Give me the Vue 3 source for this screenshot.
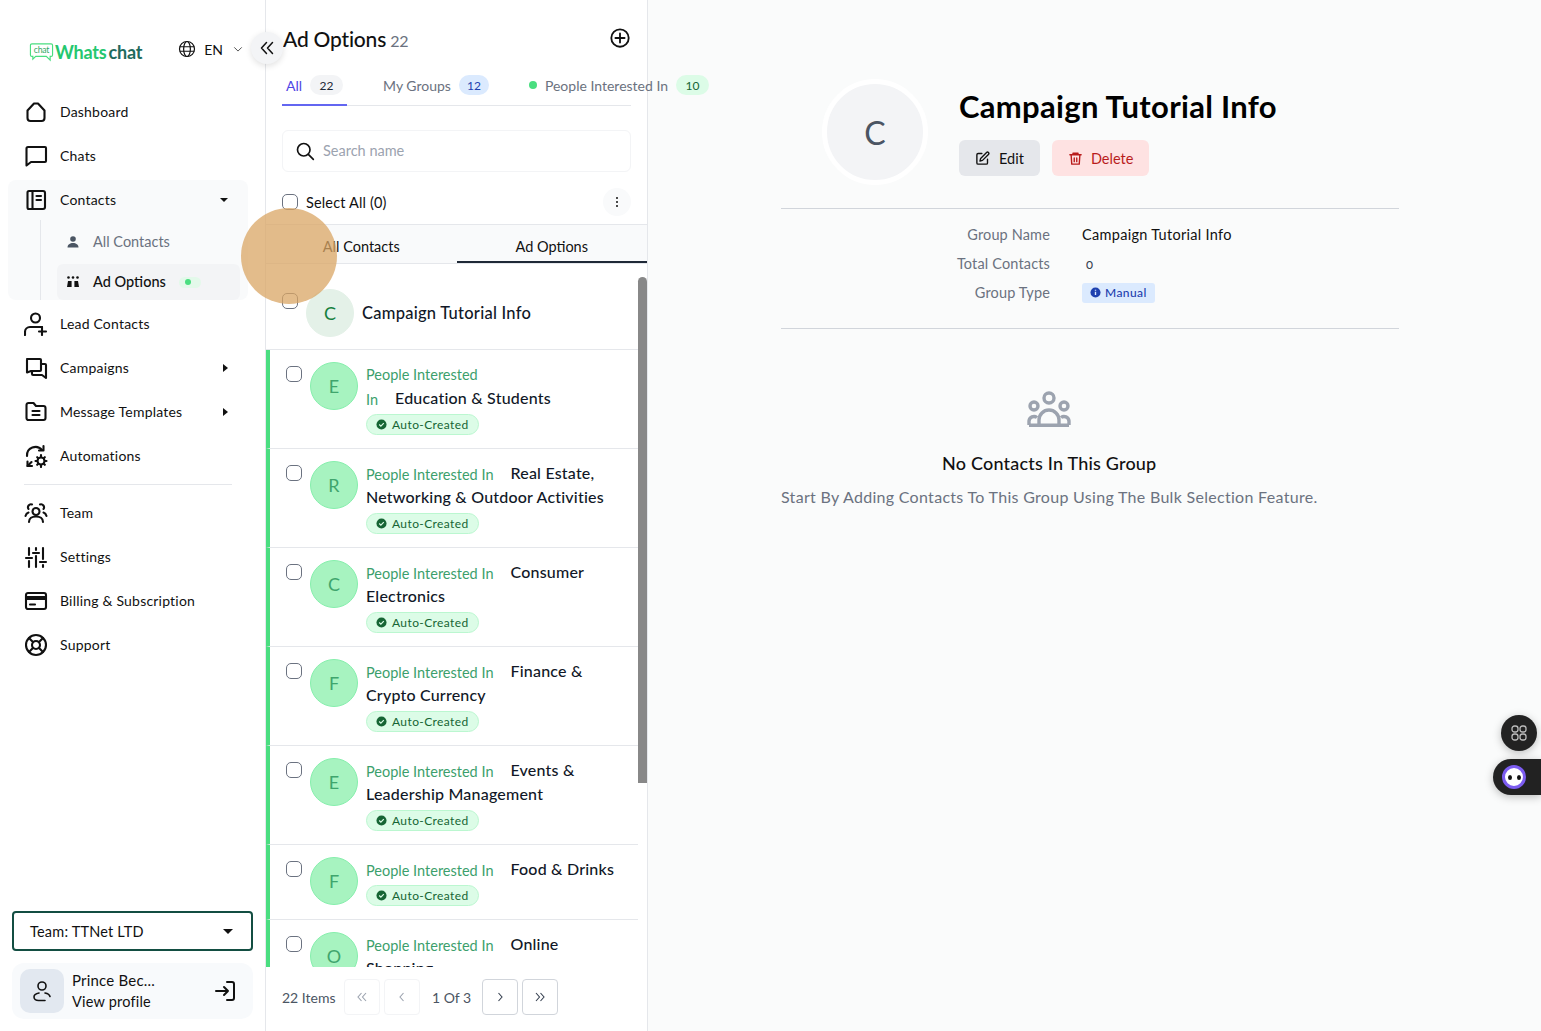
<template>
  <div class="page">
    <aside class="sidebar">
      <div class="brand">
        <div class="logo">
          <svg class="logo-mark" viewBox="0 0 26 20" fill="none" stroke="#4ade80" stroke-width="1.2">
            <path d="M3 1.500h20a1.500 1.500 0 0 1 1.500 1.500v10a1.500 1.500 0 0 1-1.500 1.500h-1v4l-4-4H7l-3 3v-3H3A1.500 1.500 0 0 1 1.500 13V3A1.500 1.500 0 0 1 3 1.500z" />
            <text x="13" y="11" text-anchor="middle" font-size="9" font-weight="400" fill="#2fa866" stroke="none">chat</text>
          </svg>
          <span class="logo-whats">Whats</span><span class="logo-chat">chat</span>
        </div>
        <div class="lang">
          <svg viewBox="0 0 24 24" width="18" height="18" fill="none" stroke="#111" stroke-width="1.6">
            <circle cx="12" cy="12" r="10" />
            <ellipse cx="12" cy="12" rx="4.500" ry="10" />
            <path d="M2.500 9h19M2.500 15h19" />
          </svg>
          <span>EN</span>
          <svg class="lang-chevron" viewBox="0 0 12 12" width="10" height="10" fill="none" stroke="#555" stroke-width="1.2">
            <path d="M1.500 4 6 8.500 10.500 4" />
          </svg>
        </div>
      </div>

      <nav class="nav">
        <template v-for="item in topNav" :key="item.label">
          <div v-if="item.sub" class="nav-group">
            <div class="nav-item short">
              <svg class="nav-icon" viewBox="0 0 24 24" fill="none" stroke="#111" stroke-width="2.100" stroke-linecap="round" stroke-linejoin="round">
                <path v-for="d in item.icon" :key="d" :d="d" />
              </svg>
              <span>{{ item.label }}</span>
              <i class="caret-down"></i>
            </div>
            <div class="sub-list">
              <div class="sub-item">
                <svg class="sub-icon" viewBox="0 0 14 14" fill="#4b5563">
                  <circle cx="7" cy="4" r="2.800" />
                  <path d="M1.500 12.500c0-3 2.500-4.500 5.500-4.500s5.500 1.500 5.500 4.500z" />
                </svg>
                <span class="sub-label">All Contacts</span>
              </div>
              <div class="sub-item active">
                <svg class="sub-icon" viewBox="0 0 14 14" fill="#111">
                  <circle cx="2.500" cy="2.500" r="1.300" />
                  <circle cx="7" cy="2.500" r="1.300" />
                  <circle cx="11.500" cy="2.500" r="1.300" />
                  <path d="M1 12 2 6h3.600v6zM8.400 12V6H12l1 6z" />
                </svg>
                <span class="sub-label">Ad Options</span>
                <span class="sub-dot"><i></i></span>
              </div>
            </div>
          </div>
          <div v-else class="nav-item">
            <svg class="nav-icon" viewBox="0 0 24 24" fill="none" stroke="#111" stroke-width="2.100" stroke-linecap="round" stroke-linejoin="round">
              <path v-for="d in item.icon" :key="d" :d="d" />
            </svg>
            <span>{{ item.label }}</span>
            <i v-if="item.arrow" class="caret-right"></i>
          </div>
        </template>
        <div class="nav-divider"></div>
        <div v-for="item in bottomNav" :key="item.label" class="nav-item">
          <svg class="nav-icon" viewBox="0 0 24 24" fill="none" stroke="#111" stroke-width="2.100" stroke-linecap="round" stroke-linejoin="round">
            <path v-for="d in item.icon" :key="d" :d="d" />
          </svg>
          <span>{{ item.label }}</span>
        </div>
      </nav>

      <div class="sidebar-foot">
        <div class="team-select">
          <span>Team: TTNet LTD</span>
          <i class="team-caret"></i>
        </div>
        <div class="profile">
          <div class="profile-avatar">
            <svg viewBox="0 0 24 24" width="24" height="24" fill="none" stroke="#111" stroke-width="1.600" stroke-linecap="round">
              <circle cx="12" cy="7" r="4" />
              <path d="M9 14c-3 .5-5 2-5 4s2 3.500 4.500 3.500H15M15 14c2.500.5 4.500 1.500 5 3.500" />
            </svg>
          </div>
          <div class="profile-text">
            <div class="profile-name">Prince Bec...</div>
            <div class="profile-link">View profile</div>
          </div>
          <svg class="logout" viewBox="0 0 24 24" width="24" height="24" fill="none" stroke="#111" stroke-width="2" stroke-linecap="round" stroke-linejoin="round">
            <path d="M14 3h5a2 2 0 0 1 2 2v14a2 2 0 0 1-2 2h-5M3 12h12M11 8l4 4-4 4" />
          </svg>
        </div>
      </div>
    </aside>

    <section class="list-panel">
      <button class="collapse">
        <svg viewBox="0 0 16 16" width="16" height="16" fill="none" stroke="#111" stroke-width="1.500" stroke-linecap="round" stroke-linejoin="round">
          <path d="M7.500 2.500 2.500 8l5 5.500M13.500 2.500 8.500 8l5 5.500" />
        </svg>
      </button>

      <div class="panel-title">
        <h1>Ad Options <small>22</small></h1>
        <svg viewBox="0 0 24 24" width="22" height="22" fill="none" stroke="#111" stroke-width="2" stroke-linecap="round">
          <circle cx="12" cy="12" r="9.500" />
          <path d="M12 7v10M7 12h10" />
        </svg>
      </div>

      <div class="tabs">
        <div class="tab current">All <span class="count grey">22</span></div>
        <div class="tab">My Groups <span class="count blue">12</span></div>
        <div class="tab"><i class="tab-dot"></i>People Interested In <span class="count green">10</span></div>
      </div>

      <div class="search">
        <svg viewBox="0 0 24 24" width="20" height="20" fill="none" stroke="#111" stroke-width="2" stroke-linecap="round">
          <circle cx="10.500" cy="10.500" r="7.500" />
          <path d="m16 16 6 6" />
        </svg>
        <span class="search-text">Search name</span>
      </div>

      <div class="select-row">
        <span class="check"></span>
        <span class="select-label">Select All (0)</span>
        <span class="kebab">
          <svg viewBox="0 0 4 12" width="4" height="12" fill="#111">
            <circle cx="2" cy="2" r="1" />
            <circle cx="2" cy="6" r="1" />
            <circle cx="2" cy="10" r="1" />
          </svg>
        </span>
      </div>

      <div class="view-tabs">
        <div class="view-tab">All Contacts</div>
        <div class="view-tab on">Ad Options</div>
      </div>

      <div class="groups">
        <div class="group plain">
          <span class="check"></span>
          <span class="avatar soft">C</span>
          <span class="plain-name">Campaign Tutorial Info</span>
        </div>
        <div v-for="g in groups" :key="g.letter + g.lines[0][1]" class="group">
          <span class="check"></span>
          <span class="avatar">{{ g.letter }}</span>
          <div class="group-body">
            <div v-for="(line, i) in g.lines" :key="i" class="group-line">
              <span v-if="line[0]" class="interest" :class="{ gap: line[1] }">{{ line[0] }}</span>
              <span v-if="line[1]" class="group-name">{{ line[1] }}</span>
            </div>
            <div class="auto-pill">
              <svg viewBox="0 0 12 12" width="11" height="11">
                <circle cx="6" cy="6" r="5.500" fill="#166534" />
                <path d="m3.500 6 1.800 1.800 3.200-3.300" fill="none" stroke="#dcfce7" stroke-width="1.300" />
              </svg>
              Auto-Created
            </div>
          </div>
        </div>
        <div class="scroll-thumb"></div>
      </div>

      <div class="pager">
        <span class="pager-total">22 Items</span>
        <span class="pg off">
          <svg viewBox="0 0 12 12" width="12" height="12"><path d="M5.500 2 2 6l3.500 4M10 2 6.500 6l3.500 4" /></svg>
        </span>
        <span class="pg off">
          <svg viewBox="0 0 12 12" width="12" height="12"><path d="M7.500 2 4 6l3.500 4" /></svg>
        </span>
        <span class="pager-page">1 Of 3</span>
        <span class="pg">
          <svg viewBox="0 0 12 12" width="12" height="12"><path d="M4.500 2 8 6l-3.500 4" /></svg>
        </span>
        <span class="pg">
          <svg viewBox="0 0 12 12" width="12" height="12"><path d="M2 2l3.500 4L2 10M6.500 2 10 6l-3.500 4" /></svg>
        </span>
      </div>

      <div class="tap-mark"></div>
    </section>

    <main class="detail">
      <div class="detail-head">
        <div class="big-avatar">C</div>
        <div>
          <h2>Campaign Tutorial Info</h2>
          <div class="actions">
            <button class="btn edit">
              <svg viewBox="0 0 24 24" width="15" height="15" fill="none" stroke="#111" stroke-width="2.200" stroke-linecap="round" stroke-linejoin="round">
                <path d="M11 4H5a2 2 0 0 0-2 2v13a2 2 0 0 0 2 2h13a2 2 0 0 0 2-2v-6" />
                <path d="M18.500 2.500a2.100 2.100 0 0 1 3 3L12 15l-4 1 1-4z" />
              </svg>
              Edit
            </button>
            <button class="btn del">
              <svg viewBox="0 0 24 24" width="15" height="15" fill="none" stroke="#b91c1c" stroke-width="2.200" stroke-linecap="round" stroke-linejoin="round">
                <path d="M3 6h18M8 6V3.500h8V6M5 6l1 15h12l1-15M10 11v6M14 11v6" />
              </svg>
              Delete
            </button>
          </div>
        </div>
      </div>

      <dl class="facts">
        <dt>Group Name</dt>
        <dd>Campaign Tutorial Info</dd>
        <dt>Total Contacts</dt>
        <dd class="zero">0</dd>
        <dt>Group Type</dt>
        <dd>
          <span class="type-badge">
            <svg viewBox="0 0 12 12" width="11" height="11">
              <circle cx="6" cy="6" r="5.500" fill="#1e40af" />
              <path d="M6 5.300v3.400M6 3v1.200" stroke="#dbeafe" stroke-width="1.500" />
            </svg>
            Manual
          </span>
        </dd>
      </dl>

      <div class="empty">
        <svg class="empty-icon" viewBox="0 0 44 36" width="44" height="36" fill="none" stroke="#9ca3af" stroke-width="3.400">
          <circle cx="22" cy="7" r="5" />
          <circle cx="7" cy="15" r="4" />
          <circle cx="37" cy="15" r="4" />
          <path d="M12 34v-5a10 10 0 0 1 20 0v5M2 34v-4a5 5 0 0 1 8-3.500M42 34v-4a5 5 0 0 0-8-3.500M2 34.300h40" />
        </svg>
        <h3>No Contacts In This Group</h3>
        <p>Start By Adding Contacts To This Group Using The Bulk Selection Feature.</p>
      </div>
    </main>

    <div class="float-grid">
      <svg viewBox="0 0 18 18" width="18" height="18" fill="none" stroke="#bbb" stroke-width="1.300">
        <rect x="2" y="2" width="6" height="6" rx="2.500" />
        <rect x="10" y="2" width="6" height="6" rx="2.500" />
        <rect x="2" y="10" width="6" height="6" rx="2.500" />
        <rect x="10" y="10" width="6" height="6" rx="2.500" />
      </svg>
    </div>
    <div class="float-bot">
      <span class="bot-face"><i></i><i></i></span>
    </div>
  </div>
</template>

<script setup>
const topNav = [
  { label: 'Dashboard', icon: ['M3.500 10.500 10 3.500h4l6.500 7V18a3 3 0 0 1-3 3h-11a3 3 0 0 1-3-3z'] },
  { label: 'Chats', icon: ['M4 3h17a1 1 0 0 1 1 1v13a1 1 0 0 1-1 1H7l-4.500 3.500V4.500A1.500 1.500 0 0 1 4 3z'] },
  { label: 'Contacts', sub: true, icon: ['M5 3h14a2 2 0 0 1 2 2v14a2 2 0 0 1-2 2H5a1.500 1.500 0 0 1-1.500-1.500v-15A1.500 1.500 0 0 1 5 3z', 'M8.500 3v18', 'M12.500 8H17', 'M12.500 12H17'] },
  { label: 'Lead Contacts', icon: ['M16 6a4.500 4.500 0 1 1-9 0 4.500 4.500 0 0 1 9 0z', 'M1 23v-3a5 5 0 0 1 5-5h12', 'M18 15v8', 'M15 19.500h7'] },
  { label: 'Campaigns', arrow: true, icon: ['M3 3h13a1 1 0 0 1 1 1v10a1 1 0 0 1-1 1H7l-4 1.500V4a1 1 0 0 1 1-1z', 'M17 8h4a1 1 0 0 1 1 1v13l-4-3H9a1 1 0 0 1-1-1v-3'] },
  { label: 'Message Templates', arrow: true, icon: ['M2.500 5a2 2 0 0 1 2-2h5l2.500 3h7.500a2 2 0 0 1 2 2v10a2 2 0 0 1-2 2h-15a2 2 0 0 1-2-2z', 'M8.500 11h7', 'M8.500 15h7'] },
  { label: 'Automations', icon: ['M3 12a8.500 8.500 0 0 1 15-6', 'M19.500 2v4.500H15', 'M3.500 22l4-4', 'M3.500 17.500V22H8', 'M17 13.500a3.500 3.500 0 1 1 0 7 3.500 3.500 0 0 1 0-7z', 'M17 11v1.500M17 21.500V23M11.500 17H13M21 17h1.500M13.200 13.200l1 1M19.800 19.800l1 1M13.200 20.800l1-1M19.800 14.200l1-1'] },
]

const bottomNav = [
  { label: 'Team', icon: ['M15.500 10.500a3.500 3.500 0 1 1-7 0 3.500 3.500 0 0 1 7 0z', 'M5 21c0-3.500 3-5.500 7-5.500s7 2 7 5.500', 'M8 3.500a3 3 0 0 0-3.500 4.500', 'M16 3.500A3 3 0 0 1 19.500 8', 'M1.500 15c.5-2 1.500-3 3-3.500', 'M22.500 15c-.5-2-1.500-3-3-3.500'] },
  { label: 'Settings', icon: ['M5 3v7', 'M5 16v6', 'M2 13h6', 'M12 3v2', 'M12 11v11', 'M9 8h6', 'M19 3v11', 'M19 20v2', 'M16 17h6'] },
  { label: 'Billing & Subscription', icon: ['M4 4h16a2 2 0 0 1 2 2v12a2 2 0 0 1-2 2H4a2 2 0 0 1-2-2V6a2 2 0 0 1 2-2z', 'M2 8h20', 'M2 10h20', 'M6 15.500h5'] },
  { label: 'Support', icon: ['M22 12a10 10 0 1 1-20 0 10 10 0 0 1 20 0z', 'M16 12a4 4 0 1 1-8 0 4 4 0 0 1 8 0z', 'M5 5l4.200 4.200', 'M19 5l-4.200 4.200', 'M5 19l4.200-4.200', 'M19 19l-4.200-4.200'] },
]

const people = 'People Interested In'

const groups = [
  { letter: 'E', lines: [['People Interested', ''], ['In', 'Education & Students']] },
  { letter: 'R', lines: [[people, 'Real Estate,'], ['', 'Networking & Outdoor Activities']] },
  { letter: 'C', lines: [[people, 'Consumer'], ['', 'Electronics']] },
  { letter: 'F', lines: [[people, 'Finance &'], ['', 'Crypto Currency']] },
  { letter: 'E', lines: [[people, 'Events &'], ['', 'Leadership Management']] },
  { letter: 'F', lines: [[people, 'Food & Drinks']] },
  { letter: 'O', lines: [[people, 'Online'], ['', 'Shopping']] },
]
</script>

<style>
html,
body {
  margin: 0;
  height: 100%;
  overflow: hidden;
}
</style>

<style scoped>
.page {
  position: relative;
  display: flex;
  height: 100vh;
  overflow: hidden;
  background: #fff;
  color: #111;
  font-family: Lato, "Noto Sans", sans-serif;
  font-size: 14px;
}

h1, h2, h3, p, dl, dd {
  margin: 0;
}

button {
  font: inherit;
  border: none;
}

/* sidebar */
.sidebar {
  width: 266px;
  flex: none;
  display: flex;
  flex-direction: column;
  box-sizing: border-box;
  border-right: 1px solid #e5e7eb;
}

.brand {
  height: 90px;
  display: flex;
  align-items: center;
  padding: 14px 22px 0 29px;
  box-sizing: border-box;
}

.logo {
  display: flex;
  align-items: center;
  font-size: 18px;
  font-weight: 700;
  letter-spacing: -.2px;
}

.logo-mark {
  width: 25px;
  height: 20px;
  margin-right: 1px;
}

.logo-whats {
  color: #25c76f;
}

.logo-chat {
  color: #1f6b5e;
  margin-left: 2px;
}

.lang {
  margin-left: auto;
  display: flex;
  align-items: center;
  gap: 8px;
  font-size: 14px;
  margin-top: -6px;
}

.lang-chevron {
  margin-left: 2px;
}

.nav {
  display: flex;
  flex-direction: column;
  padding: 0 17px 0 8px;
}

.nav-item {
  height: 44px;
  display: flex;
  align-items: center;
  gap: 12px;
  padding: 0 20px 0 16px;
  font-size: 14px;
  letter-spacing: .2px;
}

.nav-item span {
  margin-top: -2px;
}

.nav-item.short {
  height: 40px;
}

.nav-icon {
  width: 24px;
  height: 24px;
  flex: none;
}

.caret-right {
  margin-left: auto;
  border-left: 5px solid #111;
  border-top: 4px solid transparent;
  border-bottom: 4px solid transparent;
}

.caret-down {
  margin-left: auto;
  border-top: 4px solid #111;
  border-left: 4px solid transparent;
  border-right: 4px solid transparent;
}

.nav-group {
  margin: 2px 0;
  background: #f9fafb;
  border-radius: 8px;
}

.sub-list {
  margin-left: 32px;
  margin-right: 8px;
  padding: 4px 0 0 16px;
  border-left: 1px solid #e5e7eb;
  display: flex;
  flex-direction: column;
  gap: 4px;
}

.sub-item {
  height: 36px;
  display: flex;
  align-items: center;
  gap: 13px;
  padding-left: 9px;
  border-radius: 6px;
  color: #6b7280;
  font-size: 14.500px;
}

.sub-label {
  margin-top: -2px;
}

.sub-item.active {
  background: #f3f4f6;
  color: #111;
  font-weight: 500;
}

.sub-icon {
  width: 14px;
  height: 14px;
  flex: none;
}

.sub-dot {
  width: 22px;
  height: 11px;
  border-radius: 6px;
  background: #e3f9ea;
  display: flex;
  align-items: center;
  padding-left: 6px;
  box-sizing: border-box;
}

.sub-dot i {
  width: 6px;
  height: 6px;
  border-radius: 50%;
  background: #4ade80;
}

.nav-divider {
  height: 1px;
  margin: 6px 16px;
  background: #e5e7eb;
}

.sidebar-foot {
  margin-top: auto;
  padding: 0 12px 12px;
  display: flex;
  flex-direction: column;
  gap: 12px;
}

.team-select {
  height: 40px;
  box-sizing: border-box;
  border: 2px solid #134e42;
  border-radius: 4px;
  display: flex;
  align-items: center;
  justify-content: space-between;
  padding: 0 18px 0 16px;
  font-size: 14.500px;
  letter-spacing: .2px;
}

.team-caret {
  border-top: 5px solid #111;
  border-left: 5px solid transparent;
  border-right: 5px solid transparent;
}

.profile {
  height: 56px;
  display: flex;
  align-items: center;
  gap: 8px;
  padding: 0 16px 0 8px;
  background: #f8fafc;
  border-radius: 12px;
  box-sizing: border-box;
}

.profile-avatar {
  width: 44px;
  height: 44px;
  flex: none;
  border-radius: 10px;
  background: #e2e8f0;
  display: flex;
  align-items: center;
  justify-content: center;
}

.profile-text {
  flex: 1;
  font-size: 15px;
  line-height: 22px;
  letter-spacing: .2px;
}

.profile-link {
  font-size: 14.500px;
}

.logout {
  flex: none;
}

/* list panel */
.list-panel {
  position: relative;
  width: 382px;
  flex: none;
  display: flex;
  flex-direction: column;
  box-sizing: border-box;
  border-right: 1px solid #e5e7eb;
  background: #fff;
}

.collapse {
  position: absolute;
  left: -15px;
  top: 32px;
  width: 32px;
  height: 32px;
  padding: 0;
  border-radius: 50%;
  background: #f3f4f6;
  box-shadow: 0 2px 6px rgba(0, 0, 0, .12);
  display: flex;
  align-items: center;
  justify-content: center;
  z-index: 2;
}

.panel-title {
  height: 66px;
  padding: 10px 16px 0;
  display: flex;
  align-items: center;
  justify-content: space-between;
  box-sizing: border-box;
}

.panel-title h1 {
  font-size: 21px;
  font-weight: 500;
  letter-spacing: -.2px;
  margin-left: 1px;
}

.panel-title small {
  font-size: 16px;
  font-weight: 400;
  color: #6b7280;
  margin-left: -1px;
}

.tabs {
  margin: 0 16px;
  height: 40px;
  display: flex;
  gap: 32px;
  border-bottom: 1px solid #e5e7eb;
  box-sizing: border-box;
}

.tab {
  display: flex;
  align-items: center;
  gap: 8px;
  padding: 0 4px;
  height: 40px;
  box-sizing: border-box;
  border-bottom: 2px solid transparent;
  color: #6b7280;
  font-size: 14px;
  white-space: nowrap;
}

.tab.current {
  color: #4f46e5;
  border-bottom-color: #6366f1;
}

.tab-dot {
  width: 8px;
  height: 8px;
  border-radius: 50%;
  background: #4ade80;
}

.count {
  min-width: 30px;
  height: 20px;
  padding: 0 8px;
  box-sizing: border-box;
  border-radius: 10px;
  display: inline-flex;
  align-items: center;
  justify-content: center;
  font-size: 12px;
}

.count.grey {
  min-width: 33px;
  background: #f3f4f6;
  color: #1f2937;
}

.count.blue {
  background: #dbeafe;
  color: #1e40af;
}

.count.green {
  min-width: 33px;
  background: #dcfce7;
  color: #166534;
}

.search {
  margin: 24px 16px 0;
  height: 42px;
  box-sizing: border-box;
  border: 1px solid #f3f4f6;
  border-radius: 6px;
  display: flex;
  align-items: center;
  gap: 8px;
  padding: 0 12px;
  color: #9ca3af;
  font-size: 14.500px;
}

.search-text {
  margin-top: -2px;
}

.select-row {
  height: 52px;
  padding: 8px 16px 0;
  box-sizing: border-box;
  display: flex;
  align-items: center;
  gap: 8px;
  font-size: 14.500px;
  letter-spacing: .15px;
}

.check {
  width: 16px;
  height: 16px;
  flex: none;
  box-sizing: border-box;
  border: 1px solid #6b7280;
  border-radius: 5px;
  background: #fff;
}

.kebab {
  margin-left: auto;
  width: 28px;
  height: 28px;
  border-radius: 50%;
  background: #f9fafb;
  display: flex;
  align-items: center;
  justify-content: center;
}

.view-tabs {
  height: 40px;
  box-sizing: border-box;
  display: flex;
  background: #f9fafb;
  border-top: 1px solid #e5e7eb;
  border-bottom: 1px solid #e5e7eb;
}

.view-tab {
  flex: 1;
  display: flex;
  align-items: center;
  justify-content: center;
  font-size: 14.500px;
  height: 38px;
  padding-top: 7px;
  box-sizing: border-box;
  border-bottom: 2px solid transparent;
}

.view-tab.on {
  border-bottom-color: #1f2937;
}

.groups {
  position: relative;
  flex: 1;
  min-height: 0;
  overflow: hidden;
  padding-right: 9px;
}

.group {
  display: flex;
  align-items: flex-start;
  padding: 12px 8px 12px 16px;
  border-left: 4px solid #4ade80;
  border-bottom: 1px solid #e5e7eb;
}

.group.plain {
  border-left: none;
  padding-top: 25px;
}

.group > .check {
  margin-top: 4px;
  margin-right: 8px;
}

.avatar {
  width: 48px;
  height: 48px;
  flex: none;
  box-sizing: border-box;
  border-radius: 50%;
  background: #a7f3c0;
  border: 1px solid #86efac;
  color: #3fa56d;
  font-size: 18px;
  display: flex;
  align-items: center;
  justify-content: center;
}

.avatar.soft {
  background: #e4f1e8;
  border-color: #e4f1e8;
  color: #15803d;
}

.plain-name {
  margin-left: 8px;
  line-height: 48px;
  font-size: 16.500px;
  font-weight: 500;
  color: #111827;
  letter-spacing: .25px;
}

.group-body {
  margin-left: 8px;
  min-width: 0;
}

.group-line {
  height: 24px;
  line-height: 24px;
  white-space: nowrap;
}

.interest {
  color: #3c9f6c;
  font-size: 14.500px;
  vertical-align: -1px;
}

.interest.gap {
  margin-right: 17px;
}

.group-name {
  color: #111827;
  font-size: 16px;
  font-weight: 500;
  letter-spacing: .2px;
}

.auto-pill {
  margin-top: 4px;
  width: fit-content;
  height: 21px;
  box-sizing: border-box;
  padding: 0 9px;
  display: flex;
  align-items: center;
  gap: 5px;
  background: #dcfce7;
  border: 1px solid #bbf7d0;
  border-radius: 11px;
  margin-bottom: 1px;
  color: #166534;
  font-size: 12px;
  letter-spacing: .4px;
}

.scroll-thumb {
  position: absolute;
  right: 0;
  top: 13px;
  width: 9px;
  height: 506px;
  background: #888;
  border-radius: 5px 5px 0 0;
}

.pager {
  height: 64px;
  flex: none;
  padding: 0 16px 4px;
  box-sizing: border-box;
  display: flex;
  align-items: center;
  gap: 4px;
  font-size: 14px;
  color: #4b5563;
  background: #fff;
}

.pager-total {
  width: 54px;
  margin-right: 4px;
  white-space: nowrap;
}

.pager-page {
  margin: 0 8px;
  width: 38px;
  text-align: center;
  white-space: nowrap;
}

.pg {
  width: 36px;
  height: 36px;
  box-sizing: border-box;
  border: 1px solid #d1d5db;
  border-radius: 4px;
  display: flex;
  align-items: center;
  justify-content: center;
}

.pg svg {
  fill: none;
  stroke: #374151;
  stroke-width: 1.100;
}

.pg.off {
  border-color: #f3f4f6;
}

.pg.off svg {
  stroke: #9ca3af;
}

.tap-mark {
  position: absolute;
  left: -25px;
  top: 208px;
  width: 96px;
  height: 96px;
  border-radius: 50%;
  background: rgba(218, 165, 100, .75);
  pointer-events: none;
}

/* detail */
.detail {
  flex: 1;
  min-width: 0;
  background: #fafbfb;
  padding: 84px 142px 0 133px;
}

.detail-head {
  display: flex;
  align-items: flex-start;
  gap: 31px;
  padding: 0 0 23px 41px;
  margin-top: -5px;
  border-bottom: 1px solid #d1d5db;
}

.big-avatar {
  width: 106px;
  height: 106px;
  box-sizing: border-box;
  flex: none;
  border-radius: 50%;
  background: #f3f4f6;
  border: 5px solid #fff;
  color: #4b5563;
  font-size: 32px;
  display: flex;
  align-items: center;
  justify-content: center;
}

.detail-head h2 {
  font-size: 31px;
  font-weight: 700;
  line-height: 38px;
  margin-top: 8px;
  color: #000;
  letter-spacing: .3px;
}

.actions {
  display: flex;
  gap: 12px;
  margin-top: 15px;
}

.btn {
  height: 36px;
  display: flex;
  align-items: center;
  gap: 8px;
  padding: 0 16px;
  border-radius: 6px;
  font-size: 14.500px;
}

.btn.edit {
  background: #e5e7eb;
  color: #111;
  gap: 9px;
}

.btn.del {
  background: #fee2e2;
  color: #b91c1c;
}

.facts {
  display: grid;
  grid-template-columns: 269px 1fr;
  column-gap: 32px;
  grid-auto-rows: 29px;
  align-items: center;
  padding: 11px 0 21px;
  border-bottom: 1px solid #d1d5db;
  font-size: 14.500px;
}

.facts dt {
  text-align: right;
  color: #6b7280;
  letter-spacing: .15px;
}

.facts dd {
  color: #111;
  letter-spacing: .3px;
}

.facts .zero {
  padding-left: 4px;
  color: #374151;
  font-size: 13px;
  font-variant-numeric: oldstyle-nums;
}

.type-badge {
  display: inline-flex;
  align-items: center;
  gap: 4px;
  height: 20px;
  padding: 0 8px;
  background: #dbeafe;
  border-radius: 3px;
  color: #1e40af;
  font-size: 12px;
  font-weight: 500;
  letter-spacing: .4px;
}

.empty {
  width: fit-content;
  margin-top: 62px;
  text-align: center;
}

.empty-icon {
  display: block;
  margin: 0 auto;
}

.empty h3 {
  margin-top: 23px;
  font-size: 18px;
  font-weight: 500;
  line-height: 26px;
  letter-spacing: .2px;
}

.empty p {
  margin-top: 9px;
  font-size: 16px;
  line-height: 24px;
  color: #6b7280;
  letter-spacing: .3px;
}

/* floating buttons */
.float-grid {
  position: absolute;
  left: 1501px;
  top: 715px;
  width: 36px;
  height: 36px;
  border-radius: 50%;
  background: #222;
  box-shadow: 0 2px 8px rgba(0, 0, 0, .25);
  display: flex;
  align-items: center;
  justify-content: center;
}

.float-bot {
  position: absolute;
  left: 1493px;
  top: 759px;
  width: 48px;
  height: 36px;
  border-radius: 18px 0 0 18px;
  background: #222;
  box-shadow: 0 2px 8px rgba(0, 0, 0, .25);
  display: flex;
  align-items: center;
  padding-left: 9px;
  box-sizing: border-box;
}

.bot-face {
  width: 24px;
  height: 24px;
  box-sizing: border-box;
  border-radius: 50%;
  background: #fff;
  border: 3px solid #7c5cf0;
  display: flex;
  align-items: center;
  justify-content: center;
  gap: 5px;
}

.bot-face i {
  width: 4px;
  height: 5px;
  border-radius: 50%;
  background: #111;
}
</style>
